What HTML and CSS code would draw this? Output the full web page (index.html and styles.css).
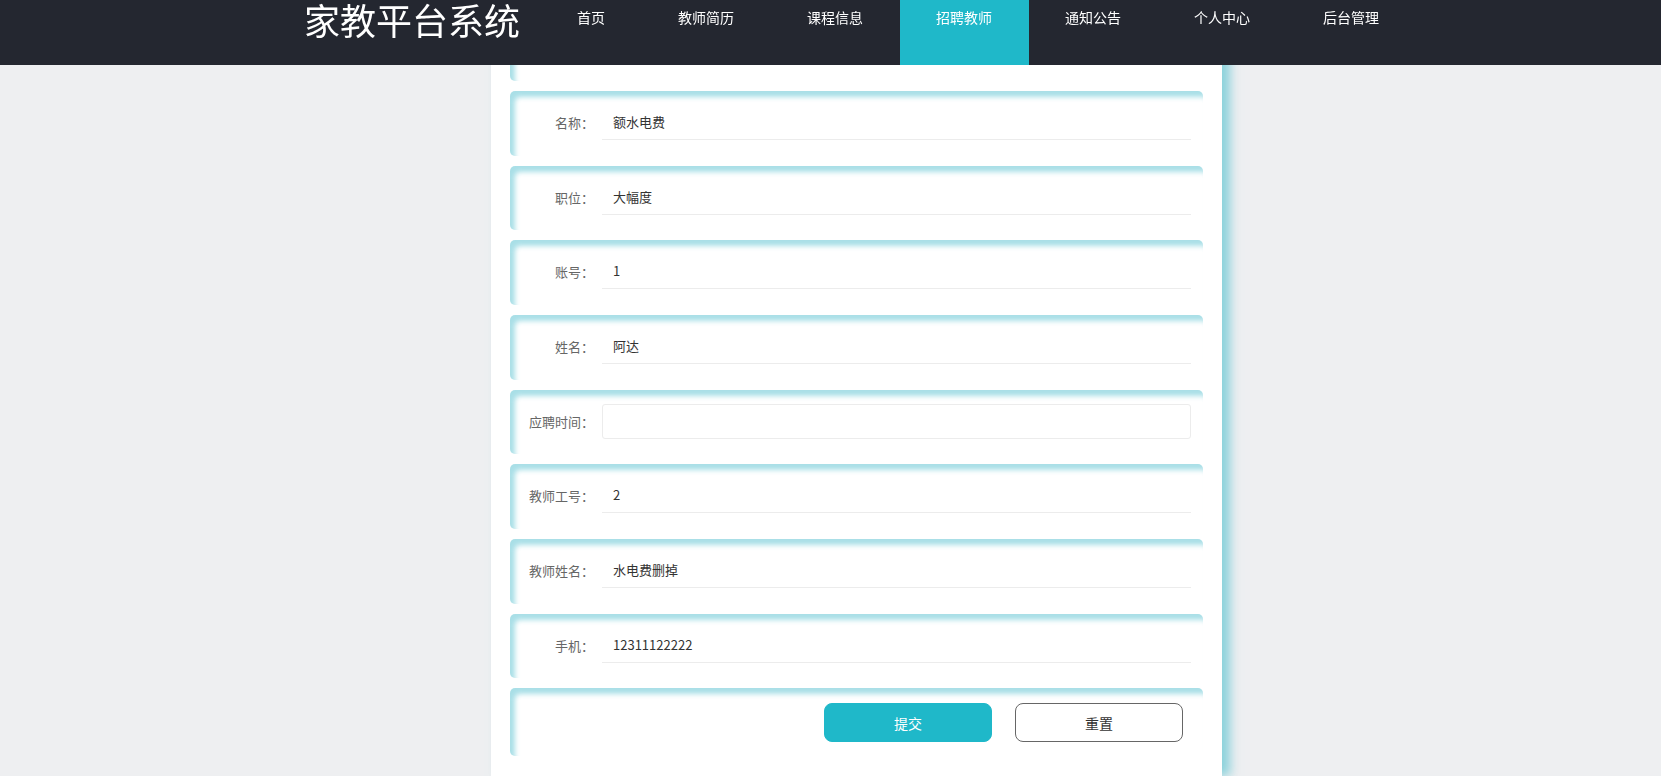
FILE: index.html
```html
<!DOCTYPE html>
<html lang="zh-CN">
<head>
<meta charset="utf-8">
<title>家教平台系统</title>
<link rel="stylesheet" href="styles.css">
</head>
<body>
<header class="topbar">
  <div class="brand">家教平台系统</div>
  <nav class="nav">
    <a class="nav-item">首页</a>
    <a class="nav-item">教师简历</a>
    <a class="nav-item">课程信息</a>
    <a class="nav-item active">招聘教师</a>
    <a class="nav-item">通知公告</a>
    <a class="nav-item">个人中心</a>
    <a class="nav-item">后台管理</a>
  </nav>
</header>

<main class="card">
  <form class="form">
    <div class="row">
      <label class="label">类型：</label>
      <div class="field line">类型</div>
    </div>
    <div class="row">
      <label class="label">名称：</label>
      <div class="field line">额水电费</div>
    </div>
    <div class="row">
      <label class="label">职位：</label>
      <div class="field line">大幅度</div>
    </div>
    <div class="row">
      <label class="label">账号：</label>
      <div class="field line">1</div>
    </div>
    <div class="row">
      <label class="label">姓名：</label>
      <div class="field line">阿达</div>
    </div>
    <div class="row">
      <label class="label">应聘时间：</label>
      <div class="field boxed"></div>
    </div>
    <div class="row">
      <label class="label">教师工号：</label>
      <div class="field line">2</div>
    </div>
    <div class="row">
      <label class="label">教师姓名：</label>
      <div class="field line">水电费删掉</div>
    </div>
    <div class="row">
      <label class="label">手机：</label>
      <div class="field line">12311122222</div>
    </div>
    <div class="row row-actions">
      <button type="button" class="btn btn-primary">提交</button>
      <button type="button" class="btn btn-default">重置</button>
    </div>
  </form>
</main>
</body>
</html>
```

FILE: styles.css
```css
* { box-sizing: border-box; }

html, body {
  margin: 0;
  padding: 0;
}

body {
  background: #eeeff1;
  font-family: "Noto Sans CJK SC", "Noto Sans", sans-serif;
  color: #333;
  overflow: hidden;
}

.topbar {
  position: fixed;
  top: 0;
  left: 0;
  right: 0;
  height: 65px;
  background: #242730;
  display: flex;
  align-items: flex-start;
  padding-left: 304px;
  z-index: 10;
}

.brand {
  width: 236.5px;
  padding-top: 1px;
  font-size: 36px;
  line-height: 36px;
  color: #fff;
  white-space: nowrap;
}

.nav {
  display: flex;
}

.nav-item {
  height: 65px;
  padding: 0 36.5px;
  font-size: 14px;
  line-height: 34px;
  color: #fff;
  text-align: center;
  white-space: nowrap;
  cursor: pointer;
}

.nav-item.active {
  background: #1fb8c9;
}

.card {
  width: 731px;
  margin: 0 0 0 491px;
  background: #fff;
  min-height: 776px;
  padding: 16.3px 19px 20px 19px;
  box-shadow: 8px 0 10px rgba(120, 205, 215, 0.85);
}

.form {
  display: flex;
  flex-direction: column;
  gap: 10px;
}

.row {
  height: 64.7px;
  display: flex;
  align-items: flex-start;
  padding-right: 12px;
  border-radius: 5px;
  background: #fff;
  box-shadow: inset 5px 6px 5px rgba(160, 220, 228, 0.9);
}

.label {
  width: 92px;
  flex: none;
  margin-top: 14px;
  text-align: right;
  padding-right: 8px;
  font-family: "Noto Sans CJK JP", "Noto Sans CJK SC", sans-serif;
  font-size: 13px;
  line-height: 35px;
  color: #666;
  white-space: nowrap;
}

.field {
  flex: 1;
  height: 35px;
  margin-top: 14px;
  padding-left: 11px;
  font-size: 13px;
  line-height: 34px;
  color: #333;
}

.field.line {
  border-bottom: 1px solid #ececec;
}

.field.boxed {
  border: 1px solid #ececec;
  border-radius: 3px;
}

.row-actions {
  height: 68px;
  justify-content: flex-end;
  padding-top: 14.4px;
  padding-right: 20px;
  gap: 23px;
}

.btn {
  width: 168px;
  height: 39.5px;
  border-radius: 8px;
  font-family: "Noto Sans CJK SC", "Noto Sans", sans-serif;
  font-size: 14px;
  cursor: pointer;
}

.btn-primary {
  background: #1fb8c9;
  color: #fff;
  border: 1px solid #1fb8c9;
}

.btn-default {
  background: #fff;
  color: #333;
  border: 1px solid #666;
}
```
